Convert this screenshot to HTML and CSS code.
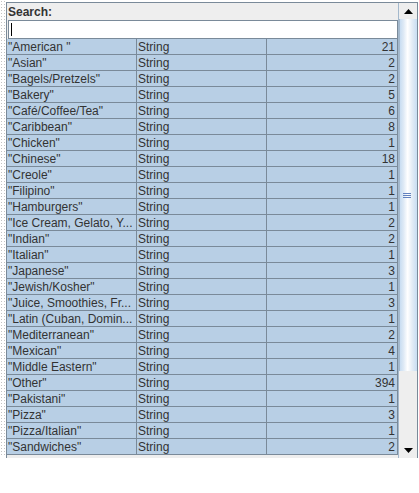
FILE: index.html
```html
<!DOCTYPE html>
<html>
<head>
<meta charset="utf-8">
<link rel="stylesheet" href="styles.css">
</head>
<body>
<div class="wrap">
  <div class="dots"></div>
  <div class="panel">
    <div class="main">
      <div class="label">Search:</div>
      <div class="field"><span class="caret"></span></div>
      <div class="table">
        <div class="row"><div class="c">"American "</div><div class="c">String</div><div class="c n">21</div></div>
        <div class="row"><div class="c">"Asian"</div><div class="c">String</div><div class="c n">2</div></div>
        <div class="row"><div class="c">"Bagels/Pretzels"</div><div class="c">String</div><div class="c n">2</div></div>
        <div class="row"><div class="c">"Bakery"</div><div class="c">String</div><div class="c n">5</div></div>
        <div class="row"><div class="c">"Café/Coffee/Tea"</div><div class="c">String</div><div class="c n">6</div></div>
        <div class="row"><div class="c">"Caribbean"</div><div class="c">String</div><div class="c n">8</div></div>
        <div class="row"><div class="c">"Chicken"</div><div class="c">String</div><div class="c n">1</div></div>
        <div class="row"><div class="c">"Chinese"</div><div class="c">String</div><div class="c n">18</div></div>
        <div class="row"><div class="c">"Creole"</div><div class="c">String</div><div class="c n">1</div></div>
        <div class="row"><div class="c">"Filipino"</div><div class="c">String</div><div class="c n">1</div></div>
        <div class="row"><div class="c">"Hamburgers"</div><div class="c">String</div><div class="c n">1</div></div>
        <div class="row"><div class="c">"Ice Cream, Gelato, Y...</div><div class="c">String</div><div class="c n">2</div></div>
        <div class="row"><div class="c">"Indian"</div><div class="c">String</div><div class="c n">2</div></div>
        <div class="row"><div class="c">"Italian"</div><div class="c">String</div><div class="c n">1</div></div>
        <div class="row"><div class="c">"Japanese"</div><div class="c">String</div><div class="c n">3</div></div>
        <div class="row"><div class="c">"Jewish/Kosher"</div><div class="c">String</div><div class="c n">1</div></div>
        <div class="row"><div class="c">"Juice, Smoothies, Fr...</div><div class="c">String</div><div class="c n">3</div></div>
        <div class="row"><div class="c">"Latin (Cuban, Domin...</div><div class="c">String</div><div class="c n">1</div></div>
        <div class="row"><div class="c">"Mediterranean"</div><div class="c">String</div><div class="c n">2</div></div>
        <div class="row"><div class="c">"Mexican"</div><div class="c">String</div><div class="c n">4</div></div>
        <div class="row"><div class="c">"Middle Eastern"</div><div class="c">String</div><div class="c n">1</div></div>
        <div class="row"><div class="c">"Other"</div><div class="c">String</div><div class="c n">394</div></div>
        <div class="row"><div class="c">"Pakistani"</div><div class="c">String</div><div class="c n">1</div></div>
        <div class="row"><div class="c">"Pizza"</div><div class="c">String</div><div class="c n">3</div></div>
        <div class="row"><div class="c">"Pizza/Italian"</div><div class="c">String</div><div class="c n">1</div></div>
        <div class="row"><div class="c">"Sandwiches"</div><div class="c">String</div><div class="c n">2</div></div>
      </div>
    </div>
    <div class="scrollbar">
      <div class="btn"><svg width="9" height="5" viewBox="0 0 9 5"><path d="M0 5 L4.5 0 L9 5 Z" fill="#000"/></svg></div>
      <div class="track">
        <div class="thumb">
          <svg class="grip" width="8" height="5" viewBox="0 0 8 5"><path d="M0 0.5H8M0 2.5H8M0 4.5H8" stroke="#6382bf" stroke-width="1"/></svg>
        </div>
      </div>
      <div class="btn"><svg width="9" height="5" viewBox="0 0 9 5"><path d="M0 0 L4.5 5 L9 0 Z" fill="#000"/></svg></div>
    </div>
  </div>
</div>
</body>
</html>
```

FILE: styles.css
```css
html, body {
  margin: 0;
  padding: 0;
  background: #ffffff;
}
body {
  font-family: "Liberation Sans", Arial, sans-serif;
  font-size: 12px;
  color: #333333;
}
.wrap {
  display: flex;
  padding-top: 2px;
}
.dots {
  width: 6px;
  height: 457px;
  margin-top: -2px;
  background-image: radial-gradient(circle, #c4c4c4 0.7px, transparent 0.9px);
  background-size: 3px 3px;
  background-position: 0 0;
}
.panel {
  display: flex;
  width: 412px;
  border-top: 1px solid #7a8a99;
  border-left: 1px solid #7a8a99;
  border-right: 1px solid #7a8a99;
  background: #eeeeee;
  box-sizing: border-box;
}
.main {
  width: 391px;
  display: flex;
  flex-direction: column;
}
.label {
  height: 17px;
  line-height: 16px;
  padding-top: 1px;
  box-sizing: border-box;
  font-weight: bold;
  padding-left: 1px;
  color: #333;
}
.field {
  height: 19px;
  margin-left: 1px;
  background: #ffffff;
  border: 1px solid #7a8a99;
  box-sizing: border-box;
  position: relative;
}
.caret {
  position: absolute;
  left: 2px;
  top: 2px;
  width: 1px;
  height: 13px;
  background: #000;
}
.table {
  display: flex;
  flex-direction: column;
}
.row {
  display: grid;
  grid-template-columns: 130px 130px 131px;
  height: 16px;
}
.c {
  background: #b8cfe5;
  border-right: 1px solid #7a8a99;
  border-bottom: 1px solid #7a8a99;
  box-sizing: border-box;
  line-height: 16px;
  padding-left: 1px;
  white-space: nowrap;
  overflow: hidden;
  color: #333333;
}
.n {
  text-align: right;
  padding-right: 2px;
}
.scrollbar {
  width: 19px;
  display: flex;
  flex-direction: column;
  border-left: 1px solid #a3b8cc;
  box-sizing: border-box;
  height: 455px;
}
.btn {
  height: 16px;
  display: flex;
  align-items: center;
  justify-content: center;
  background: #eeeeee;
}
.track {
  flex: 1;
  display: flex;
  flex-direction: column;
  background: #eeeeee;
}
.thumb {
  height: 352px;
  border-left: 1px solid #a3b8cc;
  background: linear-gradient(to right, #c8ddf2 0%, #dde9f5 20%, #ffffff 45%, #e4edf6 70%, #c8ddf2 100%);
  display: flex;
  align-items: center;
  padding-left: 3px;
  box-sizing: border-box;
}
```
